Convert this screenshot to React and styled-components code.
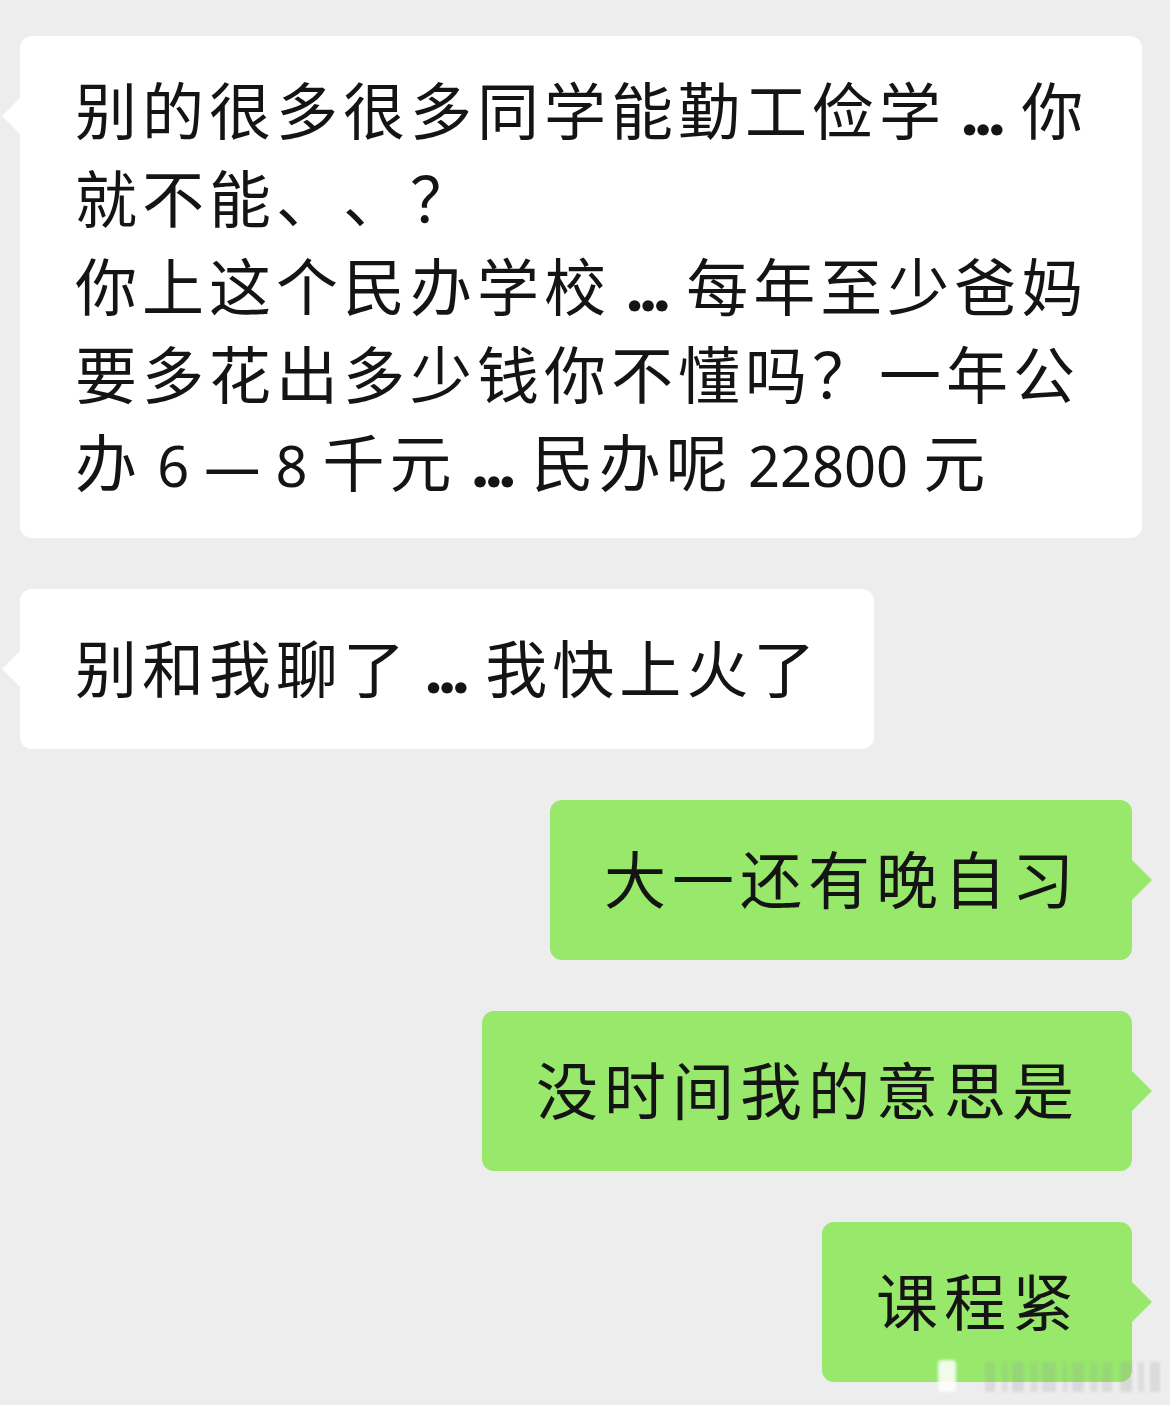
import React from "react";
import styled, { createGlobalStyle, css } from "styled-components";

const GlobalStyle = createGlobalStyle`
  html, body {
    margin: 0;
    padding: 0;
    background: #ededed;
  }
  body {
    font-family: "Noto Sans", "Noto Sans CJK SC", sans-serif;
  }
`;

const Page = styled.div`
  position: relative;
  width: 1170px;
  min-height: 1405px;
  box-sizing: border-box;
  padding: 36px 38px 0 20px;
  display: flex;
  flex-direction: column;
  gap: 51px;
  background: #ededed;
`;

const Bubble = styled.div`
  position: relative;
  align-self: ${(p) => (p.$mine ? "flex-end" : "flex-start")};
  box-sizing: border-box;
  min-height: 160px;
  padding: ${(p) => (p.$mine ? "31px 52px 31px 54px" : "31px 54px 31px 55px")};
  display: flex;
  flex-direction: column;
  justify-content: center;
  border-radius: 12px;
  background: ${(p) => (p.$mine ? "#97e86b" : "#ffffff")};
  color: #141414;
  font-size: 62px;
  line-height: 88px;
  letter-spacing: ${(p) => (p.$mine ? "6px" : "5px")};
  word-spacing: -6px;
  text-spacing-trim: space-all;
  white-space: nowrap;

  &::before {
    content: "";
    position: absolute;
    top: 60px;
    width: 20px;
    height: 40px;
    background: inherit;
    ${(p) =>
      p.$mine
        ? css`
            right: -20px;
            clip-path: polygon(0 0, 100% 50%, 0 100%);
          `
        : css`
            left: -18px;
            clip-path: polygon(100% 0, 0 50%, 100% 100%);
          `}
  }
`;

const Line = styled.div`
  display: block;
`;

const Dots = styled.span`
  font-family: "Lato", sans-serif;
  font-weight: 900;
  font-size: 70px;
  line-height: 0;
  letter-spacing: -3px;
  margin-right: 4px;
`;

const Num = styled.span`
  font-family: "Noto Sans", sans-serif;
  font-size: 56px;
  line-height: 0;
  letter-spacing: 0;
`;

const Mark = styled.svg`
  position: absolute;
  left: 930px;
  top: 1350px;
  pointer-events: none;
`;

const Ell = () => <Dots>...</Dots>;

function Watermark() {
  const bars = [
    [55, 10, 0.22], [72, 6, 0.18], [82, 12, 0.25], [100, 8, 0.2],
    [112, 14, 0.22], [132, 6, 0.18], [142, 12, 0.24], [160, 8, 0.2],
    [172, 10, 0.22], [190, 12, 0.25], [208, 6, 0.2], [220, 10, 0.22],
  ];
  return (
    <Mark width="240" height="48" viewBox="0 0 240 48">
      <defs>
        <filter id="wm-blur">
          <feGaussianBlur stdDeviation="1.6" />
        </filter>
      </defs>
      <g filter="url(#wm-blur)">
        <rect x="8" y="10" width="18" height="32" rx="4" fill="#ffffff" opacity="0.85" />
        {bars.map(([x, w, o], i) => (
          <rect key={i} x={x} y="12" width={w} height="30" fill="#9a9a9a" opacity={o} />
        ))}
      </g>
    </Mark>
  );
}

export default function App() {
  return (
    <>
      <GlobalStyle />
      <Page>
        <Bubble>
          <Line>
            别的很多很多同学能勤工俭学 <Ell /> 你
          </Line>
          <Line>就不能、、？</Line>
          <Line>
            你上这个民办学校 <Ell /> 每年至少爸妈
          </Line>
          <Line>要多花出多少钱你不懂吗？一年公</Line>
          <Line>
            办 <Num>6</Num> <Num>—</Num> <Num>8</Num> 千元 <Ell /> 民办呢{" "}
            <Num>22800</Num> 元
          </Line>
        </Bubble>
        <Bubble>
          <Line>
            别和我聊了 <Ell /> 我快上火了
          </Line>
        </Bubble>
        <Bubble $mine>
          <Line>大一还有晚自习</Line>
        </Bubble>
        <Bubble $mine>
          <Line>没时间我的意思是</Line>
        </Bubble>
        <Bubble $mine>
          <Line>课程紧</Line>
        </Bubble>
        <Watermark />
      </Page>
    </>
  );
}
